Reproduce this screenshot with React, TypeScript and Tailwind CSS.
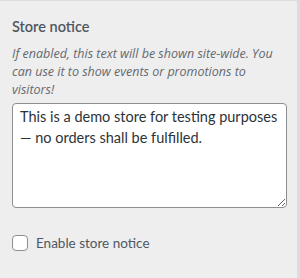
import React, { useState } from 'react';

export default function App() {
  const [text, setText] = useState(
    'This is a demo store for testing purposes — no orders shall be fulfilled.'
  );
  const [enabled, setEnabled] = useState(false);

  return (
    <div className="w-[300px] h-[278px] bg-[#eeeeee] border-t border-[#dcdcde] border-r-[3px] border-r-[#dcdcde] font-['Lato',sans-serif]">
      <div className="pl-3 pr-[10px] pt-[16px]">
        <h3 className="text-[14.5px] leading-[20px] font-semibold text-[#50575e]">Store notice</h3>
        <p className="mt-[8px] text-[12.5px] leading-[18px] italic text-[#646970] font-['Open_Sans',sans-serif]">
          If enabled, this text will be shown site-wide. You can use it to show events or promotions to visitors!
        </p>
        <textarea
          value={text}
          onChange={(e) => setText(e.target.value)}
          className="mt-[4px] block w-[275px] h-[105px] rounded-[4px] border border-[#8c8f94] bg-white px-[7px] py-[2px] text-[14.5px] leading-[21px] text-[#2c3338] outline-none"
        />
        <label className="mt-[25px] flex items-center gap-2 cursor-pointer">
          <input
            type="checkbox"
            checked={enabled}
            onChange={(e) => setEnabled(e.target.checked)}
            className="appearance-none w-4 h-4 rounded-[4px] border border-[#8c8f94] bg-white"
          />
          <span className="text-[13.5px] text-[#50575e]">Enable store notice</span>
        </label>
      </div>
    </div>
  );
}
